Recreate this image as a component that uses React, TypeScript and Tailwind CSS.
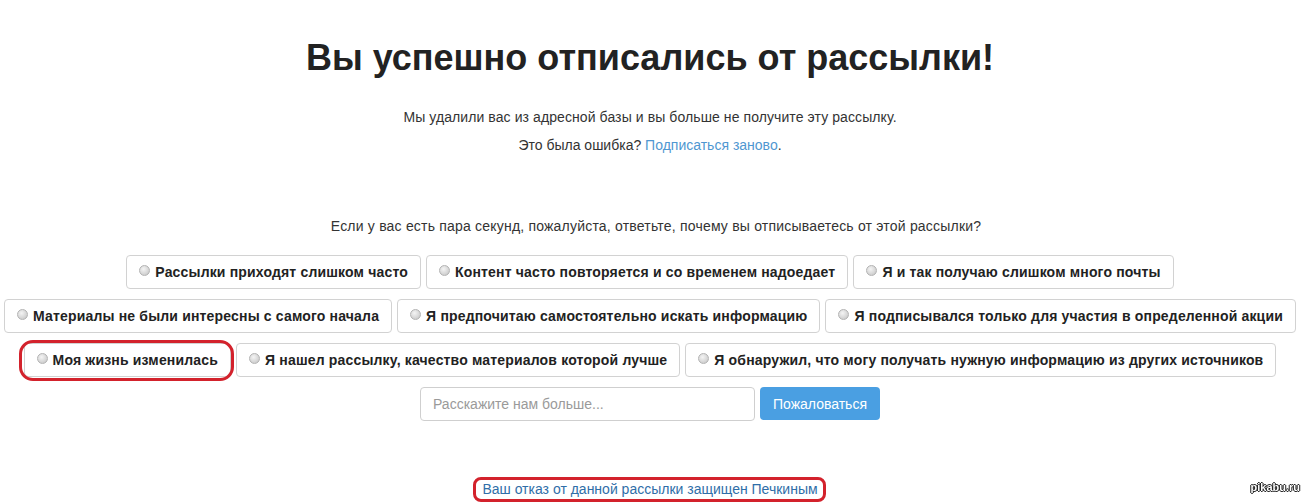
import React from "react";

const rows: string[][] = [
  [
    "Рассылки приходят слишком часто",
    "Контент часто повторяется и со временем надоедает",
    "Я и так получаю слишком много почты",
  ],
  [
    "Материалы не были интересны с самого начала",
    "Я предпочитаю самостоятельно искать информацию",
    "Я подписывался только для участия в определенной акции",
  ],
  [
    "Моя жизнь изменилась",
    "Я нашел рассылку, качество материалов которой лучше",
    "Я обнаружил, что могу получать нужную информацию из других источников",
  ],
];

function Radio() {
  return (
    <span className="mb-[3px] mr-[5px] inline-block h-[11px] w-[11px] shrink-0 rounded-full border border-[#b3b3b3] bg-[radial-gradient(circle_at_40%_35%,#f4f4f4_0%,#d6d6d6_60%,#c0c0c0_100%)]" />
  );
}

function Choice({ label, marked }: { label: string; marked?: boolean }) {
  return (
    <div className="relative">
      <button
        type="button"
        className="flex h-[34px] items-center whitespace-nowrap rounded-[4px] border border-[#d2d2d2] bg-white px-[12px] text-[14px] font-bold leading-5 tracking-[0.17px] text-[#222]"
      >
        <Radio />
        <span>{label}</span>
      </button>
      {marked && (
        <span className="pointer-events-none absolute -bottom-[4px] -left-[5px] -right-[3px] -top-[3px] rounded-[14px] border-[3px] border-[#d3222c]" />
      )}
    </div>
  );
}

export default function App() {
  return (
    <div className="min-h-[503px] w-full bg-white font-['Liberation_Sans',Arial,sans-serif] text-[#333]">
      <div className="flex w-[1300px] flex-col items-center">
        <h1 className="mt-[38px] h-[40px] text-[36px] font-bold leading-[40px] text-[#222]">
          Вы успешно отписались от рассылки!
        </h1>
        <p className="mt-[29px] text-[14px] leading-5 tracking-[0.09px]">
          Мы удалили вас из адресной базы и вы больше не получите эту рассылку.
        </p>
        <p className="mt-[8px] text-[14px] leading-5">
          Это была ошибка?{" "}
          <a href="#" className="text-[#4f97d1]">
            Подписаться заново
          </a>
          .
        </p>
        <p className="mt-[61px] pl-[12px] text-[14px] leading-5 tracking-[0.2px]">
          Если у вас есть пара секунд, пожалуйста, ответьте, почему вы отписываетесь от этой рассылки?
        </p>
        <div className="mt-[19px] flex flex-col items-center gap-[10px]">
          {rows.map((row, i) => (
            <div key={i} className="flex justify-center gap-[5px]">
              {row.map((label) => (
                <Choice key={label} label={label} marked={label === "Моя жизнь изменилась"} />
              ))}
            </div>
          ))}
        </div>
        <div className="mt-[10px] flex items-start gap-[5px]">
          <input
            type="text"
            placeholder="Расскажите нам больше..."
            className="h-[34px] w-[335px] rounded-[4px] border border-[#cfcfcf] px-[12px] text-[14px] text-[#333] outline-none placeholder:text-[#9a9a9a]"
          />
          <button
            type="button"
            className="h-[33px] w-[120px] rounded-[4px] bg-[#4a9fe2] text-[14px] leading-5 text-white"
          >
            Пожаловаться
          </button>
        </div>
        <div className="relative mt-[58px]">
          <a href="#" className="block text-[14px] leading-5 text-[#2f6ea8]">
            Ваш отказ от данной рассылки защищен Печкиным
          </a>
          <span className="pointer-events-none absolute -bottom-[3px] -left-[9px] -right-[8px] -top-[2px] rounded-[8px] border-[3px] border-[#d3222c]" />
        </div>
      </div>
      <div className="pointer-events-none fixed bottom-[8px] right-[6px] text-[11px] font-bold text-white [text-shadow:0_0_1px_#000,0_0_1px_#000,1px_0_0_#333,-1px_0_0_#333,0_1px_0_#333,0_-1px_0_#333]">
        pikabu.ru
      </div>
    </div>
  );
}
